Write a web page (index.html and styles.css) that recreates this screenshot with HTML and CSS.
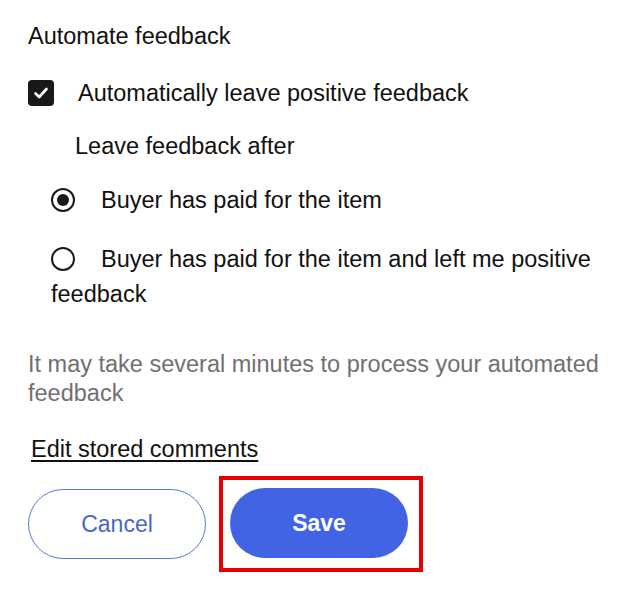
FILE: index.html
```html
<!DOCTYPE html>
<html>
<head>
<meta charset="utf-8">
<link rel="stylesheet" href="styles.css">
</head>
<body>
<div class="panel">
  <h2 class="title">Automate feedback</h2>
  <label class="check-row">
    <span class="checkbox">
      <svg width="18" height="18" viewBox="0 0 18 18"><path d="M3.5 9.5 L7.2 13 L14.5 5" fill="none" stroke="#fff" stroke-width="2.6" stroke-linecap="round" stroke-linejoin="round"/></svg>
    </span>
    <span>Automatically leave positive feedback</span>
  </label>
  <div class="sub">Leave feedback after</div>
  <div class="radio-row">
    <span class="radio checked"></span><span class="rtext">Buyer has paid for the item</span>
  </div>
  <div class="radio-row wrap">
    <span class="radio"></span><span class="rtext">Buyer has paid for the item and left me positive</span> feedback
  </div>
  <p class="note">It may take several minutes to process your automated feedback</p>
  <a class="edit" href="#">Edit stored comments</a>
  <div class="actions">
    <button class="btn cancel">Cancel</button>
    <div class="highlight"><button class="btn save">Save</button></div>
  </div>
</div>
</body>
</html>
```
FILE: styles.css
```css
html, body { margin: 0; padding: 0; background: #fff; }
body { font-family: "Liberation Sans", Arial, sans-serif; color: #111; }
.panel { padding: 22px 0 0 28px; width: 590px; }
.title { font-size: 23.5px; font-weight: normal; margin: 0; line-height: 28px; }
.check-row { display: flex; align-items: center; margin-top: 29px; font-size: 23.5px; line-height: 28px; }
.checkbox { width: 26px; height: 26px; background: #191919; border-radius: 4px; display: flex; align-items: center; justify-content: center; margin-right: 24px; }
.sub { font-size: 23.5px; line-height: 28px; margin: 25px 0 0 47px; }
.radio-row { font-size: 23.5px; line-height: 35px; margin: 23px 0 0 23px; }
.radio-row.wrap { margin-top: 24px; }
.radio { display: inline-block; width: 24px; height: 24px; border: 2px solid #191919; border-radius: 50%; box-sizing: border-box; vertical-align: -4px; margin-right: 26px; position: relative; }
.radio.checked::after { content: ""; position: absolute; left: 4px; top: 4px; width: 12px; height: 12px; border-radius: 50%; background: #191919; }
.note { color: #707070; font-size: 23.5px; line-height: 29px; margin: 38px 0 0 0; }
.edit { display: inline-block; color: #111; font-size: 23.5px; line-height: 28px; margin: 27px 0 0 3px; text-decoration: underline; text-underline-offset: 3px; }
.actions { display: flex; align-items: center; margin-top: 13px; }
.btn { width: 178px; height: 70px; border-radius: 35px; font-family: "Liberation Sans", Arial, sans-serif; font-size: 23px; cursor: pointer; }
.cancel { background: #fff; border: 1.5px solid #5b78d4; color: #4a66c9; }
.highlight { border: 4px solid #e60000; padding: 8px 11px 10px 7px; margin-left: 13px; }
.save { display: block; background: #4264e4; border: none; color: #fff; font-weight: bold; }
```
